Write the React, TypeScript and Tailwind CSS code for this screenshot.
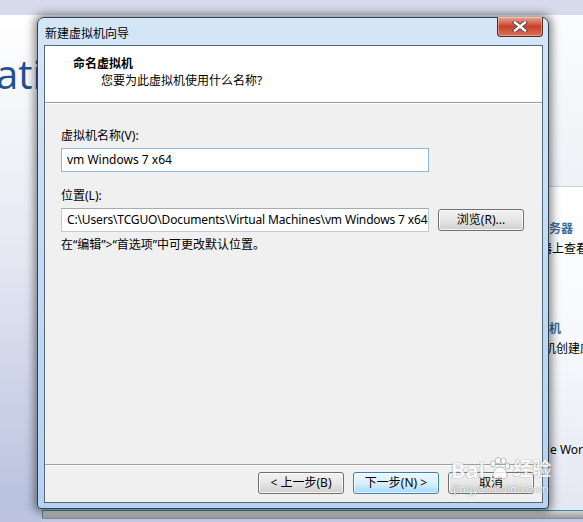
import React from 'react';

function WinButton({ label, primary }: { label: string; primary?: boolean }) {
  return (
    <button
      className={
        primary
          ? 'w-[86px] h-[22px] rounded-[3px] border border-[#3c7fb1] bg-gradient-to-b from-[#eaf6fd] via-[#d9f0fc] to-[#a7d9f5] shadow-[inset_0_0_0_1px_rgba(255,255,255,0.7)] text-[12px] leading-[16px] text-black'
          : 'w-[86px] h-[22px] rounded-[3px] border border-[#707070] bg-gradient-to-b from-[#f2f2f2] via-[#e6e6e6] to-[#cfcfcf] shadow-[inset_0_0_0_1px_rgba(255,255,255,0.8)] text-[12px] leading-[16px] text-black'
      }
    >
      {label}
    </button>
  );
}

function CloseButton() {
  return (
    <div className="absolute right-0 top-[-1px] w-[46px] h-[20px] rounded-b-[4px] border border-[#5a2a22] border-t-0 bg-gradient-to-b from-[#e9a595] via-[#c73f26] to-[#d9705a] flex items-center justify-center shadow-[inset_0_0_0_1px_rgba(255,255,255,0.35)]">
      <svg width="16" height="11" viewBox="0 0 16 11">
        <path d="M3 1.5 L13 9.5 M13 1.5 L3 9.5" stroke="#4a4a4a" strokeWidth="4.2" strokeLinecap="square" />
        <path d="M3 1.5 L13 9.5 M13 1.5 L3 9.5" stroke="#ffffff" strokeWidth="2.4" strokeLinecap="square" />
      </svg>
    </div>
  );
}

function BaiduMark() {
  return (
    <div className="absolute left-[446px] top-[456px] w-[110px] h-[54px] pointer-events-none flex flex-col items-center opacity-80">
      <div className="flex items-end gap-[2px]">
        <span className="text-[22px] leading-[26px] font-bold text-white [text-shadow:0_0_1px_#888,0_0_1px_#888]">Bai</span>
        <svg width="24" height="24" viewBox="0 0 24 24" className="mb-[2px]">
          <g fill="#ffffff" stroke="#9a9a9a" strokeWidth="0.8">
            <ellipse cx="6" cy="8" rx="2.6" ry="3.2" />
            <ellipse cx="11" cy="4.5" rx="2.6" ry="3.2" />
            <ellipse cx="16.5" cy="5" rx="2.6" ry="3.2" />
            <ellipse cx="20.5" cy="10" rx="2.4" ry="3" />
            <path d="M6 20 C6 14 10 11 13 11 C16 11 20 14 20 20 C20 23 16 23 13 22 C10 23 6 23 6 20 Z" />
          </g>
        </svg>
        <span className="text-[19px] leading-[26px] font-bold text-white [text-shadow:0_0_1px_#888,0_0_1px_#888]">经验</span>
      </div>
      <span className="text-[11px] leading-[14px] text-white [text-shadow:0_0_1px_#888,0_0_1px_#888]">jingyan.baidu.com</span>
    </div>
  );
}

export default function App() {
  return (
    <div className="relative w-[583px] h-[522px] overflow-hidden bg-[#bcc4e0] font-['Noto_Sans','Noto_Sans_CJK_SC',sans-serif] text-[12px] leading-[16px] text-black">
      {/* desktop strip */}
      <div className="h-[15px] bg-[#d6daea]" />

      {/* background workstation window */}
      <div className="h-[495px] flex">
        <div className="w-[549px] shrink-0 h-full bg-gradient-to-b from-white via-[#e4e7f2] to-[#b8c1de] overflow-hidden">
          <div className="mt-[39px] ml-[-4px] font-['Open_Sans',sans-serif] text-[40px] leading-[40px] text-[#21508f]">
            ation
          </div>
        </div>
        <div className="flex-1 min-w-0 h-full flex flex-col whitespace-nowrap">
          <div className="h-[172px] shrink-0 bg-gradient-to-b from-[#fbfcfd] to-[#eef1f6] border-b border-[#c9d0db]" />
          <div className="flex-1 bg-gradient-to-b from-white via-[#f7f8fc] to-[#e3e7f2] flex flex-col">
            <div className="mt-[34px] ml-[-12px] font-bold text-[12px] leading-[16px] text-[#3a6aa0]">服务器</div>
            <div className="mt-[4px] ml-[-9px]">器上查看管理</div>
            <div className="mt-[64px] ml-[-24px] font-bold text-[12px] leading-[16px] text-[#3a6aa0]">虚拟机</div>
            <div className="mt-[4px] ml-[-5px]">机创建应用</div>
            <div className="mt-[85px] ml-[1px]">e Workstation</div>
          </div>
        </div>
      </div>

      {/* lower desktop edge */}
      <div className="h-[12px] flex">
        <div className="w-[42px] shrink-0" />
        <div className="flex-1 flex flex-col">
          <div className="h-[8px] border-l border-t border-[#3d8898] bg-gradient-to-b from-[#d2d2d2] to-[#9c9c9c]" />
          <div className="flex-1 bg-[#c3c9e0] border-t border-[#7f8db0]" />
        </div>
      </div>

      {/* wizard dialog */}
      <div className="absolute left-[37px] top-[17px] w-[512px] h-[492px] flex flex-col pl-[6px] pr-[5px] pb-[5px] rounded-t-[7px] rounded-b-[4px] border border-[#2f3f52] bg-gradient-to-b from-[#d5e6f7] via-[#c3dbf2] to-[#b7d2ee] shadow-[0_0_9px_3px_rgba(0,0,0,0.45)]">
        <div className="relative h-[27px] shrink-0 pt-[8px] pl-[1px]">
          <span>新建虚拟机向导</span>
          <CloseButton />
        </div>

        <div className="flex-1 flex flex-col border border-[#56687e] bg-[#f0f0f0]">
          {/* header */}
          <div className="h-[57px] shrink-0 bg-white border-b border-[#a0a0a0] pt-[10px]">
            <div className="pl-[28px] font-bold">命名虚拟机</div>
            <div className="pl-[56px] mt-[1px]">您要为此虚拟机使用什么名称?</div>
          </div>
          <div className="h-px bg-white" />

          {/* body */}
          <div className="flex-1 px-[16px] pt-[24px]">
            <div>虚拟机名称(V):</div>
            <div className="mt-[4px] w-[368px] h-[24px] bg-white border border-[#92b6da] flex items-center pl-[5px]">
              vm Windows 7 x64
            </div>

            <div className="mt-[16px]">位置(L):</div>
            <div className="mt-[4px] flex items-center">
              <div className="w-[368px] h-[24px] bg-white border border-[#c3c8cf] border-t-[#a6abb3] flex items-center pl-[5px] overflow-hidden whitespace-nowrap tracking-[-0.15px]">
                C:\Users\TCGUO\Documents\Virtual Machines\vm Windows 7 x64
              </div>
              <div className="ml-[9px]">
                <WinButton label="浏览(R)..." />
              </div>
            </div>

            <div className="mt-[5px]">在“编辑”&gt;“首选项”中可更改默认位置。</div>
          </div>

          {/* footer */}
          <div className="h-[38px] shrink-0 border-t border-[#a0a0a0]">
            <div className="h-px bg-white" />
            <div className="flex justify-end gap-[9px] pr-[8px] pt-[6px]">
              <WinButton label="< 上一步(B)" />
              <WinButton label="下一步(N) >" primary />
              <WinButton label="取消" />
            </div>
          </div>
        </div>
      </div>

      <BaiduMark />
    </div>
  );
}
